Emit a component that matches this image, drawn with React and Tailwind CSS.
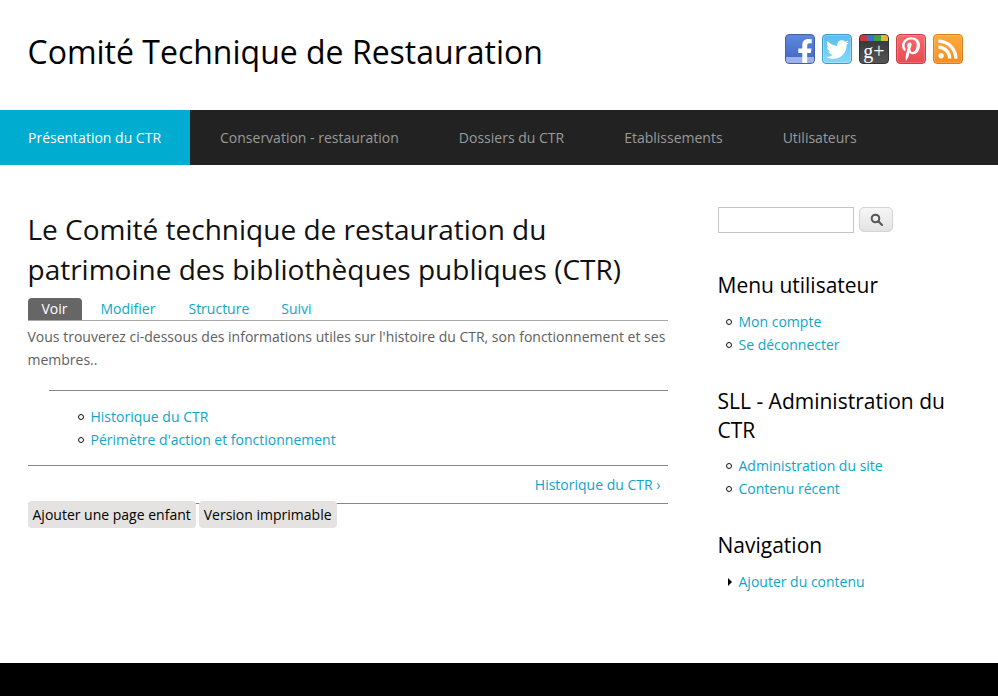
import { FaFacebookF, FaTwitter, FaPinterestP, FaRss } from "react-icons/fa"

const navItems = ["Présentation du CTR", "Conservation - restauration", "Dossiers du CTR", "Etablissements", "Utilisateurs"]

const SocialIcons = () => (
  <div className="flex gap-[7px]">
    <div className="relative w-[30px] h-[30px] rounded-[4px] border border-[#3f62a8] bg-gradient-to-b from-[#5f88e0] to-[#3f66c0] overflow-hidden">
      <div className="absolute left-0 right-0 bottom-0 h-[6px] bg-[#9db1ea]"></div>
      <FaFacebookF className="absolute left-[11px] top-[4px] w-[16px] h-[25px] text-white" />
    </div>
    <div className="flex items-center justify-center w-[30px] h-[30px] rounded-[4px] border border-[#3f9cc7] bg-gradient-to-b from-[#58bdf0] to-[#86d8fb] shadow-[inset_0_0_0_1px_rgba(255,255,255,0.25)]">
      <FaTwitter className="w-[23px] h-[23px] text-white" />
    </div>
    <div className="flex flex-col w-[30px] h-[30px] rounded-[4px] border border-[#333] bg-gradient-to-b from-[#333] to-[#555] overflow-hidden">
      <div className="flex h-[6px] shrink-0">
        <div className="flex-1 bg-[#c8383c]"></div>
        <div className="flex-1 bg-[#3b6fd0]"></div>
        <div className="flex-1 bg-[#3f9f4a]"></div>
        <div className="flex-1 bg-[#e0b82f]"></div>
      </div>
      <div className="flex-1 flex items-center justify-center text-white font-['Liberation_Serif',serif] text-[20px] leading-none pb-[3px]">g+</div>
    </div>
    <div className="flex items-center justify-center w-[30px] h-[30px] rounded-[4px] border border-[#c93f45] bg-gradient-to-b from-[#f9686c] to-[#e84a52] shadow-[inset_0_0_0_1px_rgba(255,255,255,0.2)]">
      <FaPinterestP className="w-[20px] h-[24px] text-white" />
    </div>
    <div className="flex items-center justify-center w-[30px] h-[30px] rounded-[4px] border border-[#d9801c] bg-gradient-to-b from-[#ffa93e] to-[#f58d1e] shadow-[inset_0_0_0_1px_rgba(255,255,255,0.2)]">
      <FaRss className="w-[22px] h-[22px] text-white" />
    </div>
  </div>
)

const SideBlock = ({ title, links, arrow, tall }) => (
  <div className="mb-[31px]">
    <h2 className={tall ? "text-[21px] leading-[29px] text-black mb-[9px] -ml-[0.5px]" : "text-[21px] leading-[29px] text-black mb-[10px] -ml-[0.5px]"}>{title}</h2>
    <ul>
      {links.map((l, i) => (
        <li key={i} className="flex items-center h-[23px] text-[14px]">
          <span className="w-[20.5px] flex justify-end pr-[6.5px]">
            {arrow
              ? <span className="w-0 h-0 border-y-[4px] border-y-transparent border-l-[4px] border-l-black"></span>
              : <span className="w-[6px] h-[6px] rounded-full border border-[#111]"></span>}
          </span>
          <a className="text-[#0ea5c6]">{l}</a>
        </li>
      ))}
    </ul>
  </div>
)

const App = () => {
  return (
    <div className="min-h-[696px] flex flex-col bg-white font-['Open_Sans',sans-serif]">
      <header className="h-[110px] flex items-center justify-between pl-[28px] pr-[35px] pb-[6px]">
        <h1 className="text-[32px] leading-[44px] text-black -ml-[0.5px]">Comité Technique de Restauration</h1>
        <div className="pb-[6px]"><SocialIcons /></div>
      </header>

      <nav className="h-[55px] flex bg-[#222222] text-[14px]">
        {navItems.map((item, i) => (
          <a key={i} className={i === 0 ? "flex items-center pl-[28px] pr-[29px] bg-[#00acd0] text-white" : "flex items-center px-[30px] text-[#9a9a9a]"}>{item}</a>
        ))}
      </nav>

      <div className="flex-1 flex pl-[28px] pt-[44px]">
        <main className="w-[640px]">
          <h1 className="text-[28px] leading-[40px] text-[#111] -ml-[0.5px]">Le Comité technique de restauration du patrimoine des bibliothèques publiques (CTR)</h1>
          <div className="flex mt-[9px] border-b border-[#aaa] text-[14px] h-[23px]">
            <a className="w-[54px] h-[22px] pb-[2px] pr-[1px] rounded-t-[4px] bg-[#666] text-white flex items-center justify-center">Voir</a>
            <a className="ml-[18.5px] text-[#0ea5c6] leading-[21px]">Modifier</a>
            <a className="ml-[33px] text-[#0ea5c6] leading-[21px]">Structure</a>
            <a className="ml-[32px] text-[#0ea5c6] leading-[21px]">Suivi</a>
          </div>
          <p className="text-[14px] leading-[23px] text-[#606060] mt-[4px] -ml-[0.5px]">Vous trouverez ci-dessous des informations utiles sur l'histoire du CTR, son fonctionnement et ses membres..</p>
          <div className="ml-[21px] mt-[19px] border-t border-[#888] pt-[14px]">
            <ul>
              {["Historique du CTR", "Périmètre d'action et fonctionnement"].map((l, i) => (
                <li key={i} className="flex items-center h-[23px] text-[14px]">
                  <span className="w-[41.5px] flex justify-end pr-[6.5px]">
                    <span className="w-[6px] h-[6px] rounded-full border border-[#111]"></span>
                  </span>
                  <a className="text-[#0ea5c6]">{l}</a>
                </li>
              ))}
            </ul>
          </div>
          <div className="mt-[14px] border-t border-b border-[#888] h-[39px] flex items-center justify-end pr-[7.5px] text-[14px] text-[#0ea5c6]">Historique du CTR ›</div>
          <div className="flex gap-[3px] -mt-[3px] text-[14px] text-black">
            <a className="h-[27px] pl-[4.5px] pr-[5.5px] leading-[27px] rounded-[4px] bg-[#e5e3e1]">Ajouter une page enfant</a>
            <a className="h-[27px] pl-[4.5px] pr-[5.5px] leading-[27px] rounded-[4px] bg-[#e5e3e1]">Version imprimable</a>
          </div>
        </main>

        <aside className="w-[250px] ml-[50px] -mt-[2px]">
          <div className="flex items-start gap-[5px] mb-[38px]">
            <input className="w-[136px] h-[26px] border border-[#c4c4c4] bg-white" />
            <button className="w-[34px] h-[25px] rounded-[5px] border border-[#d4d4d4] bg-gradient-to-b from-[#f6f6f6] to-[#e3e3e3] flex items-center justify-center">
              <svg width="13" height="13" viewBox="0 0 13 13" fill="none" stroke="#555" strokeWidth="2">
                <circle cx="5.5" cy="5.5" r="3.8" />
                <path d="M8.3 8.3 12 12" strokeLinecap="round" />
              </svg>
            </button>
          </div>
          <SideBlock title="Menu utilisateur" links={["Mon compte", "Se déconnecter"]} />
          <SideBlock title="SLL - Administration du CTR" links={["Administration du site", "Contenu récent"]} tall />
          <SideBlock title="Navigation" links={["Ajouter du contenu"]} arrow />
        </aside>
      </div>

      <footer className="h-[33px] bg-black"></footer>
    </div>
  )
}

export default App
